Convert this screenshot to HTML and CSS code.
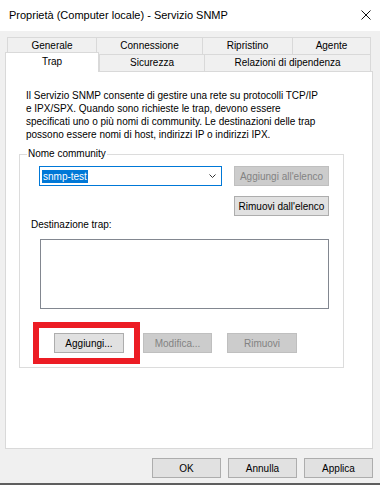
FILE: index.html
```html
<!DOCTYPE html>
<html lang="it">
<head>
    <meta charset="UTF-8">
    <link rel="stylesheet" href="styles.css">
    <title>Proprietà (Computer locale) - Servizio SNMP</title>
</head>
<body>

<div class="titlebar">
    <span class="title">Proprietà (Computer locale) - Servizio SNMP</span>
    <svg class="close" width="10" height="10" viewBox="0 0 10 10">
        <path d="M0.5 0.5L9.5 9.5M9.5 0.5L0.5 9.5" stroke="#111" stroke-width="1"/>
    </svg>
</div>

<div class="dialog">
    <div class="tab-row">
        <div class="tab tab-generale">Generale</div>
        <div class="tab tab-connessione">Connessione</div>
        <div class="tab tab-ripristino">Ripristino</div>
        <div class="tab tab-agente">Agente</div>
    </div>
    <div class="tab-row">
        <div class="tab tab-active">Trap</div>
        <div class="tab tab-sicurezza">Sicurezza</div>
        <div class="tab tab-relazioni">Relazioni di dipendenza</div>
    </div>

    <div class="panel">
        <p class="intro">
            Il Servizio SNMP consente di gestire una rete su protocolli TCP/IP<br>
            e IPX/SPX. Quando sono richieste le trap, devono essere<br>
            specificati uno o più nomi di community. Le destinazioni delle trap<br>
            possono essere nomi di host, indirizzi IP o indirizzi IPX.
        </p>

        <div class="group">
            <span class="group-title">Nome community</span>

            <div class="community-row">
                <div class="combo">
                    <span class="combo-value">snmp-test</span>
                    <svg class="chevron" width="7" height="4" viewBox="0 0 7 4">
                        <path d="M0.5 0.5L3.5 3.5L6.5 0.5" fill="none" stroke="#333" stroke-width="1"/>
                    </svg>
                </div>
                <button class="btn btn-wide" disabled>Aggiungi all'elenco</button>
            </div>

            <div class="remove-row">
                <button class="btn btn-wide">Rimuovi dall'elenco</button>
            </div>

            <div class="dest-label">Destinazione trap:</div>
            <div class="listbox"></div>

            <div class="action-row">
                <span class="highlight"></span>
                <button class="btn btn-add">Aggiungi...</button>
                <button class="btn btn-edit" disabled>Modifica...</button>
                <button class="btn btn-remove" disabled>Rimuovi</button>
            </div>
        </div>
    </div>

    <div class="footer">
        <button class="btn btn-footer">OK</button>
        <button class="btn btn-footer">Annulla</button>
        <button class="btn btn-footer">Applica</button>
    </div>
</div>

</body>
</html>
```

FILE: styles.css
```css
body {
    margin: 0;
    width: 380px;
    height: 487px;
    background-color: #ffffff;
    font-family: "Liberation Sans", Arial, sans-serif;
    font-size: 10px;
    color: #000;
    overflow: hidden;
}

/* window caption */
.titlebar {
    height: 31px;
    display: flex;
    align-items: center;
    justify-content: space-between;
    padding: 0 9px 1px 9px;
    box-sizing: border-box;
    background-color: #ffffff;
}

.title {
    font-size: 11px;
}

.close {
    display: block;
}

.dialog {
    height: 454px;
    box-sizing: border-box;
    padding: 6px 7px 0 5px;
    background-color: #f0f0f0;
    border-bottom: 2px solid #5e5e5e;
}

/* tabs */
.tab-row {
    display: flex;
    height: 17px;
    padding-left: 2px;
}

.tab {
    height: 17px;
    line-height: 16px;
    box-sizing: border-box;
    border: 1px solid #d9d9d9;
    border-bottom: none;
    background-color: #f0f0f0;
    text-align: center;
    white-space: nowrap;
    flex: 0 0 auto;
}

.tab + .tab {
    margin-left: -1px;
}

.tab-generale { width: 90px; }
.tab-connessione { width: 107px; }
.tab-ripristino { width: 91px; }
.tab-agente { width: 79px; }

.tab-active {
    position: relative;
    z-index: 1;
    width: 94px;
    height: 20px;
    line-height: 17px;
    margin: -2px 0 0 -2px;
    background-color: #ffffff;
}

.tab-active + .tab {
    margin-left: 0;
}

.tab-sicurezza { width: 106px; }
.tab-relazioni { width: 167px; }

/* page body */
.panel {
    width: 368px;
    height: 378px;
    box-sizing: border-box;
    border: 1px solid #d9d9d9;
    background-color: #ffffff;
}

.intro {
    margin: 0;
    padding: 17px 0 0 20px;
    line-height: 13px;
    white-space: nowrap;
}

.group {
    position: relative;
    width: 325px;
    height: 214px;
    box-sizing: border-box;
    margin: 13px 0 0 13px;
    padding: 11px 14px 0 19px;
    border: 1px solid #dcdcdc;
}

.group-title {
    position: absolute;
    top: -8px;
    left: 7px;
    padding: 0 1px;
    line-height: 13px;
    background-color: #ffffff;
}

.community-row {
    display: flex;
    gap: 12px;
}

.combo {
    width: 183px;
    height: 20px;
    box-sizing: border-box;
    border: 1px solid #0078d7;
    display: flex;
    align-items: center;
    justify-content: space-between;
    padding: 0 5px 0 2px;
}

.combo-value {
    background-color: #0078d7;
    color: #ffffff;
    line-height: 13px;
    padding: 0 1px;
}

.chevron {
    display: block;
}

.btn {
    height: 20px;
    box-sizing: border-box;
    padding: 0;
    border: 1px solid #adadad;
    background-color: #e1e1e1;
    font-family: inherit;
    font-size: 10px;
    color: #000;
    white-space: nowrap;
}

.btn:disabled {
    border-color: #bfbfbf;
    background-color: #cccccc;
    color: #838383;
}

.btn-wide {
    width: 95px;
}

.remove-row {
    display: flex;
    justify-content: flex-end;
    margin-top: 10px;
}

.dest-label {
    margin: 2px 0 0 -8px;
    line-height: 13px;
}

.listbox {
    width: 289px;
    height: 70px;
    box-sizing: border-box;
    margin: 8px 0 0 1px;
    border: 1px solid #828790;
    background-color: #ffffff;
}

.action-row {
    position: relative;
    display: flex;
    margin-top: 24px;
}

.btn-add {
    width: 70px;
    margin-left: 15px;
}

.btn-edit {
    width: 69px;
    margin-left: 19px;
}

.btn-remove {
    width: 70px;
    margin-left: 15px;
}

/* red annotation frame round "Aggiungi..." */
.highlight {
    position: absolute;
    top: -11px;
    left: -6px;
    width: 107px;
    height: 42px;
    box-sizing: border-box;
    border: 6px solid #ec1c24;
}

.footer {
    display: flex;
    justify-content: flex-end;
    gap: 7px;
    margin-top: 9px;
}

.btn-footer {
    width: 69px;
}
```
